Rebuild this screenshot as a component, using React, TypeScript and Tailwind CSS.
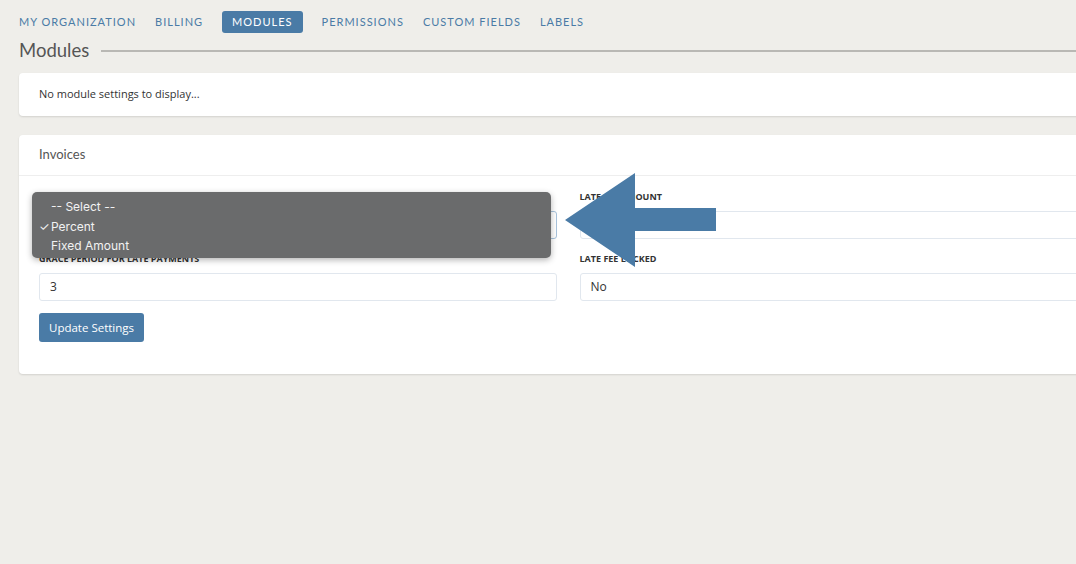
import React from 'react'

const tabs = ['My Organization', 'Billing', 'Modules', 'Permissions', 'Custom Fields', 'Labels']

const Field: React.FC<{ label: string; value: string; focused?: boolean; children?: React.ReactNode }> = ({
  label,
  value,
  focused,
  children
}) => (
  <div className="relative flex flex-col">
    <label className="h-[19px] text-[9px] font-bold uppercase leading-[10px] text-[#333]">{label}</label>
    <div
      className={`flex h-[28px] items-center rounded-[3px] border px-[10px] text-[12px] text-[#333] ${
        focused ? 'border-[#a8c3dc]' : 'border-[#e1e7ee]'
      }`}
    >
      {value}
    </div>
    {children}
  </div>
)

export default function App() {
  return (
    <div
      className="relative h-[564px] w-[1076px] overflow-hidden bg-[#efeeea]"
      style={{ fontFamily: '"Open Sans", "Liberation Sans", sans-serif' }}
    >
      <div className="w-[1117px] pl-[19px]">
        {/* tabs */}
        <nav className="flex items-center gap-[19px] pt-[11px]" style={{ fontFamily: 'Lato, sans-serif' }}>
          {tabs.map((t) =>
            t === 'Modules' ? (
              <span
                key={t}
                className="flex h-[22px] items-center rounded-[3px] bg-[#4a7ba6] px-[10px] text-[11px] uppercase tracking-[1px] text-white"
              >
                {t}
              </span>
            ) : (
              <span key={t} className="text-[11px] uppercase tracking-[1px] text-[#4a7ba6]">
                {t}
              </span>
            )
          )}
        </nav>

        {/* heading */}
        <div className="mt-[5px] flex items-center gap-[12px]">
          <h1 className="text-[18.5px] leading-[25px] text-[#555]" style={{ fontFamily: 'Lato, sans-serif' }}>
            Modules
          </h1>
          <div className="h-[2px] flex-1 bg-[#b9b8b4]" />
        </div>

        {/* empty module card */}
        <div className="mt-[10px] flex h-[43px] items-center rounded-[4px] bg-white px-[20px] text-[11px] text-[#333] shadow-[0_1px_2px_rgba(0,0,0,0.12)]">
          No module settings to display...
        </div>

        {/* invoices card */}
        <div className="mt-[19px] rounded-[4px] bg-white shadow-[0_1px_2px_rgba(0,0,0,0.12)]">
          <div className="flex h-[41px] items-center border-b border-[#eeeeee] px-[20px] text-[13px] text-[#555]" style={{ fontFamily: 'Lato, sans-serif' }}>
            Invoices
          </div>
          <div className="px-[20px] pb-[32px] pt-[16px]">
            <div className="grid grid-cols-2 gap-x-[23px] gap-y-[15px]">
              <Field label="Late Fee Type" value="Percent" focused>
                {/* open native select list */}
                <div className="absolute left-[-7px] top-0 z-10 h-[66px] w-[519px] rounded-[5px] bg-[#6a6b6c] pt-[5px] text-[12px] leading-[19.5px] text-[#f2f2f2] shadow-[0_2px_6px_rgba(0,0,0,0.3)]" style={{ fontFamily: 'Inter, Roboto, sans-serif' }}>
                  <div className="pl-[19px]">-- Select --</div>
                  <div className="flex">
                    <span className="w-[19px] pl-[7px]">✓</span>
                    <span>Percent</span>
                  </div>
                  <div className="pl-[19px]">Fixed Amount</div>
                </div>
              </Field>
              <Field label="Late Fee Amount" value="" />
              <Field label="Grace Period for Late Payments" value="3" />
              <Field label="Late Fee Locked" value="No" />
            </div>
            <button className="mt-[12px] h-[29px] rounded-[3px] bg-[#4a7ba6] px-[10px] text-[11.5px] text-white">
              Update Settings
            </button>
          </div>
        </div>
      </div>

      {/* annotation arrow */}
      <svg className="absolute left-[565px] top-[173px]" width="151" height="94" viewBox="0 0 151 94">
        <polygon points="0,47 70,0 70,35 151,35 151,58 70,58 70,94" fill="#4a7ba6" />
      </svg>
    </div>
  )
}
